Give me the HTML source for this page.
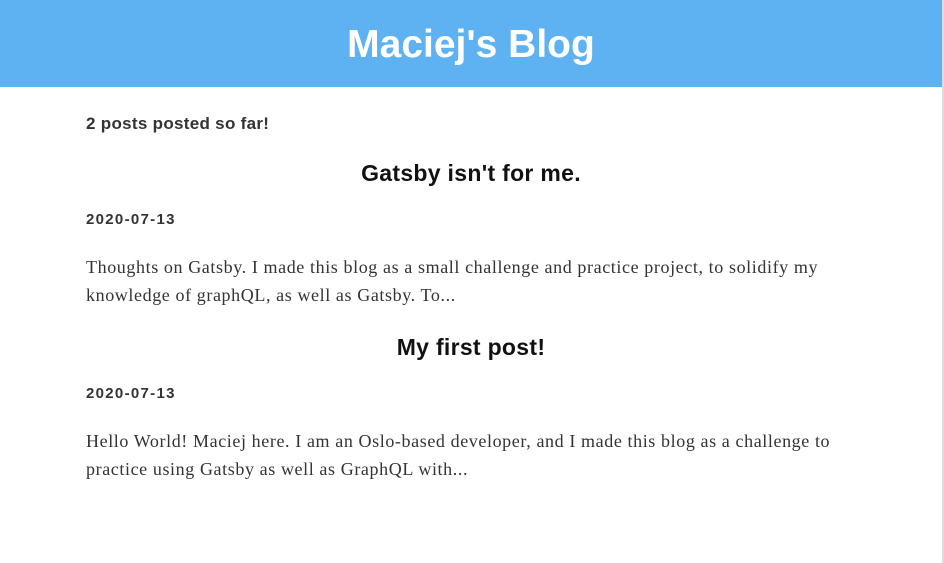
<!DOCTYPE html>
<html><head><style>
body{margin:0;width:944px;height:563px;background:#fff;position:relative;overflow:hidden;font-family:"Liberation Sans",sans-serif}
.hdr{position:absolute;left:0;top:0;width:942px;height:87px;background:#5eb2f2;color:#fff;font-weight:bold;font-size:39px;text-align:center;line-height:90px}
.edge{position:absolute;left:942px;top:0;width:2px;height:563px;background:#ddd}
.c{position:absolute;left:86px;width:770px;white-space:nowrap}
.s{font-weight:bold;font-size:17px;color:#333;letter-spacing:0.3px}
.h{font-weight:bold;font-size:23px;color:#111;text-align:center;letter-spacing:0.3px;left:0;width:942px}
.d{font-weight:bold;font-size:15px;color:#333;letter-spacing:1.3px}
.p{font-family:"Liberation Serif",serif;font-size:18px;line-height:28px;color:#333;letter-spacing:0.6px}
</style></head><body>
<div class="hdr">Maciej's Blog</div><div class="edge"></div>
<div class="c s" style="top:114px">2 posts posted so far!</div>
<div class="c h" style="top:160px">Gatsby isn't for me.</div>
<div class="c d" style="top:211px">2020-07-13</div>
<div class="c p" style="top:253px">Thoughts on Gatsby. I made this blog as a small challenge and practice project, to solidify my<br>knowledge of graphQL, as well as Gatsby. To...</div>
<div class="c h" style="top:334px">My first post!</div>
<div class="c d" style="top:385px">2020-07-13</div>
<div class="c p" style="top:427px">Hello World! Maciej here. I am an Oslo-based developer, and I made this blog as a challenge to<br>practice using Gatsby as well as GraphQL with...</div>
</body></html>
